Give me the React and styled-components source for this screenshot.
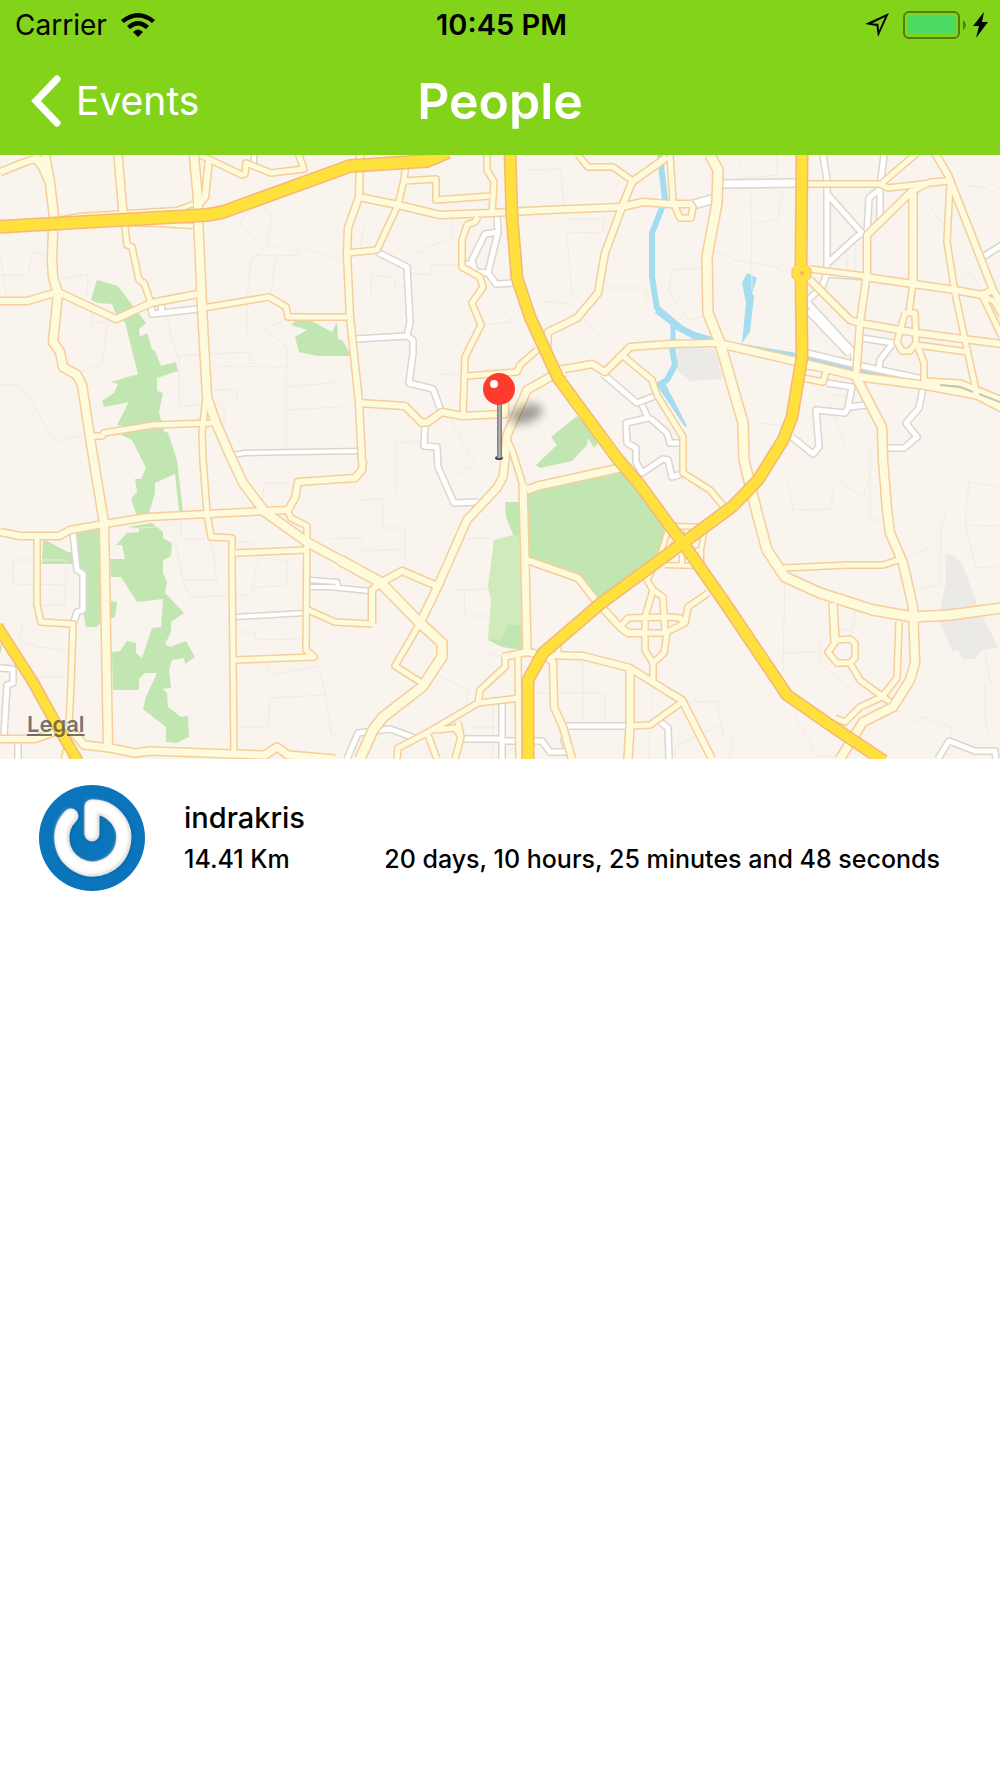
import React from "react";
import styled, { createGlobalStyle } from "styled-components";

const GlobalStyle = createGlobalStyle`
  body {
    margin: 0;
    background-color: #ffffff;
    font-family: Inter, "Liberation Sans", sans-serif;
  }
`;
const Page = styled.div`
  display: flex;
  flex-direction: column;
`;
const Header = styled.header`
  background-color: #83d31b;
`;
const StatusBar = styled.div`
  display: grid;
  grid-template-columns: 1fr auto 1fr;
  align-items: center;
  height: 50px;
  padding: 0 12px 0 15px;
  font-size: 28px;
  line-height: 50px;
  color: #000000;
`;
const StatusGroup = styled.div`
  display: flex;
  align-items: center;
  justify-content: ${(props) => props.$align || "flex-start"};
  gap: ${(props) => props.$gap};
`;
const Clock = styled.time`
  font-size: 29px;
  font-weight: 600;
`;
const NavBar = styled.nav`
  display: grid;
  grid-template-columns: 1fr auto 1fr;
  align-items: center;
  height: 102px;
  padding: 0 30px 3px;
  color: #ffffff;
`;
const BackButton = styled.button`
  justify-self: start;
  display: flex;
  align-items: center;
  gap: 15px;
  padding: 0;
  border: none;
  background: none;
  color: inherit;
  font-family: inherit;
  font-size: 39px;
  line-height: 50px;
  cursor: pointer;
`;
const Title = styled.h1`
  margin: 0;
  font-size: 50px;
  line-height: 60px;
  font-weight: 600;
`;
const MapBox = styled.section`
  position: relative;
`;
const MapSvg = styled.svg`
  display: block;
  width: 100%;
  height: auto;
`;
const LegalLink = styled.a`
  position: absolute;
  left: 27px;
  bottom: 21px;
  font-size: 22px;
  line-height: 28px;
  font-weight: 600;
  color: rgba(60, 60, 60, 0.7);
  text-decoration: underline;
`;
const PeopleList = styled.ul`
  margin: 0;
  padding: 0;
  list-style: none;
`;
const PersonRow = styled.li`
  display: flex;
  align-items: center;
  gap: 39px;
  padding: 26px 60px 26px 39px;
`;
const Info = styled.div`
  flex: 1;
  display: flex;
  flex-direction: column;
  gap: 8px;
`;
const Name = styled.div`
  font-size: 29px;
  line-height: 34px;
  font-weight: 500;
`;
const Details = styled.div`
  display: flex;
  justify-content: space-between;
  font-size: 25px;
  line-height: 32px;
  font-weight: 500;
`;

const park = "#c2e6b1";
const water = "#a5dcf0";
const ground = "#ebeae7";

const areas = [
  [park, "M97 125 118 131 133 151 146 168 139 174 140 182 147 178 152 194 155 196 161 211 176 207 178 216 157 223 157 236 163 238 159 257 164 276 168 278 177 305 183 357 179 356 175 319 155 328 155 338 149 358 137 361 131 344 137 337 135 324 141 324 146 313 137 295 132 285 121 280 130 272 117 270 129 247 104 252 102 246 114 238 118 229 111 227 138 219 125 167 118 164 112 149 98 148 91 145Z"],
  [park, "M127 372 152 368 163 377 163 383 172 388 171 401 163 405 163 418 167 427 165 438 184 458 171 467 171 477 165 489 170 492 186 486 195 502 185 509 184 503 172 505 169 515 171 533 162 534 167 538 168 552 181 562 188 561 189 582 176 588 166 587 166 572 143 554 146 542 157 518 145 518 139 524 139 535 113 535 112 497 120 496 127 486 136 488 136 498 142 503 152 473 161 472 163 444 137 447 121 422 111 422 110 404 125 404 122 390 116 390 127 378 139 377 139 373Z"],
  [park, "M110 446 117 447 115 462 110 464Z"],
  [park, "M75 378 101 374 102 467 96 472 86 472 83 457 83 418 77 412Z"],
  [park, "M43 384 68 397 72 397 74 409 42 409Z"],
  [park, "M0 489 2 492 0 500Z"],
  [park, "M291 170 297 164 310 165 332 177 337 167 338 184 343 186 351 201 318 201 299 197 295 182 307 175Z"],
  [park, "M577 261 588 272 598 288 594 293 588 283 587 290 572 306 540 313 536 310 557 290 551 282Z"],
  [park, "M528 338 623 317 650 353 667 377 658 402 600 447 580 423 529 402Z"],
  [park, "M505 347 520 347 522 495 502 492 488 485 508 440 513 379 506 362Z"],
  ["#cfebbc", "M494 385 513 380 521 380 522 470 508 470 501 485 488 484 491 445 488 432Z"],
  [ground, "M677 193 715 194 723 224 690 226 677 215Z"],
  [ground, "M945 400 952 400 963 410 977 450 983 462 998 492 982 495 975 504 962 504 958 495 953 497 939 465 942 445 946 428Z"],
  [water, "M747 118 757 123 752 138 754 141 750 177 742 188 746 148 742 128Z"],
  [water, "M656 229 664 226 687 271 685 272Z"],
];

const rivers = [
  [6, "M660 0 665 45 652 78 652 122 657 153 670 164 680 174"],
  [7, "M657 155 670 165 680 173 693 180 717 187"],
  [5, "M673 168 673 194 M717 187 793 200"],
  [6, "M672 192 675 210 667 225 658 230"],
  [6, "M790 200 857 213 895 222"],
];

const lanes = [
  "M0 120 28 120 32 98 44 98 45 112 M0 98 6 141 M62 124 88 119 87 142 M75 219 102 209 108 166 91 169 94 150",
  "M0 230 20 230 56 286 85 280 M166 160 177 201 249 197 251 209 M179 201 179 251 222 249",
  "M261 48 272 62 267 91 278 91 M250 55 240 68 263 94 251 105 247 145 247 180 M276 101 297 100 299 92 340 105 M256 100 276 101 271 138",
  "M211 211 287 212 287 192 265 175 297 158 M213 235 236 234 238 247 M286 215 286 294 M286 232 340 227 M286 255 340 252 M224 250 224 269",
  "M13 405 66 405 65 450 41 450 M13 405 13 429 65 430 M22 469 20 485 38 492 80 497 M175 385 183 425 190 442 251 440 259 402 287 406 287 430 252 433",
  "M262 357 264 328 305 328 M181 365 181 384 205 384 M130 374 175 370 M211 383 217 425 182 425 M235 387 251 387 251 395",
  "M267 504 269 520 318 511 326 540 270 543 268 572 238 572 M235 477 255 477 256 485 300 484 M326 542 331 580 340 580 M25 522 70 522",
  "M371 120 371 140 M372 120 395 123 395 132 407 131 M364 73 359 97 M412 100 452 82 452 65 M410 118 430 120 431 110 460 110",
  "M523 15 561 14 565 65 M566 64 605 64 602 78 567 77 572 144 M606 133 646 133 646 148 M540 146 573 149 605 190 M495 145 513 167 M482 170 512 167",
  "M435 219 463 220 M448 260 475 310 450 322 M396 338 396 288 420 286 M356 345 383 344 383 373 405 373 405 405 M330 384 362 383 362 396 402 394",
  "M452 384 490 383 M455 435 488 434 M464 434 465 461 488 461 M490 495 490 501 504 501 M435 518 469 536 466 550",
  "M583 503 583 570 M535 538 605 538 605 570 M653 528 648 604 M470 572 500 572 M493 540 493 603",
  "M738 0 740 10 751 22 752 135 M777 0 777 20 730 25 M755 68 778 64 783 35 M713 95 735 105 775 112 802 124",
  "M668 135 673 115 702 113 M668 135 688 165 710 160 M760 268 784 271 M846 85 847 115 M855 85 855 120 M898 70 878 90 872 80",
  "M918 38 948 75 M900 20 920 70 M964 30 987 33 990 38 1000 32 M960 122 970 117 982 135 M895 130 878 130",
  "M780 320 789 329 793 355 832 354 832 336 840 327 863 342 870 322 M870 290 870 365 882 365 M830 240 855 241 M830 250 845 290",
  "M785 422 783 515 780 520 M783 498 820 497 M820 485 835 474 853 475 855 455 M820 485 820 508 855 537 865 525",
  "M907 402 933 391 M912 435 940 430 941 372 947 355 M965 370 969 327 1000 332 M965 370 976 413 1000 411 M965 370 1000 371",
  "M985 495 990 528 1000 523 M985 528 985 560 988 580 M897 554 915 569 920 561 952 572 950 580 M795 560 817 601 840 602",
  "M675 548 717 546 723 580 733 585 729 603 M677 590 722 569 M675 590 675 603",
];

// [fill width, path]
const streets = [
  [5, "M151 150 152 159 162 158 198 154 M161 148 162 158"],
  [4, "M233 300 245 298 360 296"],
  [4, "M254 0 254 10"],
  [5, "M73 378 77 415 83 419 83 455 77 457 74 467"],
  [5, "M0 513 13 514 13 528 7 530 4 580 M18 588 18 604"],
  [4, "M235 462 304 458"],
  [4, "M310 425 337 427 338 432 M310 432 330 432 370 436"],
  [5, "M497 60 498 77 488 118 496 129 513 128 M498 77 485 79 472 105 475 117 488 118 M465 109 472 109"],
  [5, "M377 97 407 112 410 167 407 181 413 185 413 198 409 228 433 234 441 256 M355 184 407 181"],
  [5, "M425 270 424 291 437 292 438 312 454 348 478 347"],
  [5, "M603 219 637 248 655 241 M642 250 648 263 626 268 627 288 636 293 636 307 642 318 663 304 668 305 672 322 685 318"],
  [5, "M650 263 667 278 670 288 681 288"],
  [8, "M692 50 713 44"],
  [7, "M723 29 797 28"],
  [5, "M823 0 827 25 827 118 822 132 808 145 M828 40 862 78 855 83 828 108"],
  [5, "M884 0 880 32 880 65 M880 34 869 43 867 80"],
  [5, "M827 119 865 122 M862 183 893 188 880 205 879 213"],
  [5, "M808 148 853 197 855 208 M808 156 849 199"],
  [5, "M807 198 857 210 923 224"],
  [5, "M827 228 852 232 848 252 868 250 M848 253 845 258 816 255 819 292 813 299 792 282"],
  [5, "M923 233 919 253 906 268 917 282 904 293 887 293"],
  [5, "M983 102 1002 90"],
  [5, "M502 543 502 604 M463 584 502 584 M502 586 542 586 550 597 567 597 M563 582 569 600"],
  [5, "M565 571 627 571"],
  [5, "M347 604 358 578 390 574 415 583"],
  [5, "M658 565 668 573 669 604"],
  [5, "M938 604 949 586 975 596 995 596 996 604"],
];

const roads = [
  [6, "M0 17 28 6 40 3"],
  [8, "M34 0 43 12 50 28 54 62 53 77 52 105 53 122 58 138 53 187 60 197 63 212 77 220 82 230 92 295 104 368 108 592 M45 0 50 28"],
  [7, "M118 0 123 58 125 72"],
  [5, "M125 72 127 90 132 92 139 125 144 128 151 148"],
  [8, "M194 0 198 45 198 62 200 105 202 152 207 242"],
  [8, "M207 242 216 268 230 300 243 328 265 357 307 387 340 405"],
  [9, "M340 405 380 427 420 468 442 488 442 502 422 532 383 562 373 575 360 604"],
  [5, "M206 242 202 278 203 305 207 358 211 382 232 383 232 412 234 599"],
  [5, "M92 281 102 281 104 278 153 270 212 268"],
  [6, "M0 146 27 146 58 137 116 164 151 148 198 139"],
  [5, "M203 153 269 142 286 152 288 162 347 162"],
  [5, "M200 0 242 20 245 19 246 8 271 18 304 14 298 -2"],
  [6, "M209 5 205 42 198 50"],
  [4, "M58 65 80 61 177 55 193 49 M128 68 160 69 193 71 M0 73 55 69"],
  [6, "M0 377 20 381 59 381 70 375 104 369 148 362 207 359 265 356 288 355 295 343 298 327 355 323 362 315 363 305"],
  [5, "M37 380 37 450 41 467 73 469 71 528 69 572"],
  [7, "M69 572 84 590 110 593 135 598 150 596 233 599 265 600 277 592 288 600 335 604"],
  [6, "M0 584 35 584 55 577 M68 590 65 604"],
  [5, "M288 357 291 363 307 371 306 495 314 502 235 505"],
  [5, "M235 398 307 395"],
  [5, "M308 455 335 467 372 469"],
  [6, "M372 469 372 435 380 428 402 416 437 431"],
  [6, "M360 0 359 42 348 73 347 98 350 162 359 248 362 308"],
  [5, "M407 -2 404 25 398 50 377 95 347 98 M404 26 436 24 436 45 490 41"],
  [6, "M359 42 398 50 440 60 492 58 547 55 622 52"],
  [6, "M622 52 643 47 670 49 690 49"],
  [5, "M487 0 487 15 494 27 492 58"],
  [5, "M478 62 475 67 467 70 462 85 462 112 480 122 483 132 472 148 481 170 465 202 463 260"],
  [6, "M359 248 405 251 422 268 428 267 442 257 462 261 505 259 505 245"],
  [5, "M467 221 517 217 520 210 537 195"],
  [6, "M667 2 632 27 622 52 605 98 598 138 577 163 548 177 547 195"],
  [5, "M578 0 588 12 613 12 633 26"],
  [7, "M565 217 550 222 527 235 517 258 507 280 505 305 503 322 497 333 467 365 437 433 420 468"],
  [5, "M420 468 395 511 422 528"],
  [5, "M507 285 512 295 523 330"],
  [7, "M523 330 525 405 527 498"],
  [6, "M558 215 582 211 592 209 605 217 630 192 670 189 717 188"],
  [7, "M717 188 790 205 803 208 860 222 923 230 977 240 1002 253"],
  [5, "M623 201 652 225 657 240 683 282 683 318 710 335 725 353"],
  [5, "M670 0 673 47 680 63 691 63 693 52 690 48"],
  [9, "M710 0 718 15 717 48 707 102 708 158 720 188 743 268 744 305 757 358 767 395 785 422 820 438 873 455 913 462 950 460 1002 453"],
  [5, "M808 29 880 29 888 33 948 26 M882 28 917 -2 M913 36 930 27 948 26"],
  [6, "M935 -2 948 20 993 135 1002 150"],
  [5, "M950 28 947 87 955 138 965 185 976 235"],
  [7, "M913 38 913 128"],
  [5, "M913 128 909 158 M905 158 897 187 902 196 910 196 916 188 915 158 905 158 M918 192 924 208 924 228"],
  [6, "M913 35 867 80 867 118 860 168 856 222"],
  [8, "M856 222 882 272 883 305 887 355 890 378 903 408 913 452 915 508 910 525 893 552 863 567 840 604"],
  [6, "M865 122 955 135 982 140 993 135"],
  [5, "M810 114 865 121 M982 140 1002 182 M984 142 994 146 1002 160"],
  [6, "M810 125 850 165 860 168 917 178 1002 189"],
  [5, "M917 190 968 197"],
  [5, "M923 226 960 228 980 236 1002 245"],
  [5, "M805 211 827 213 823 227 803 223"],
  [7, "M527 335 538 331 620 313"],
  [6, "M527 405 578 423 597 447 620 472 628 478 645 478"],
  [5, "M622 470 628 463 670 462 680 463 685 468 667 477 664 498 653 508 645 495 645 462 653 435 647 425 652 415"],
  [5, "M653 435 663 442 665 478 M645 478 665 478 M653 508 653 525 M685 468 688 452 708 438"],
  [6, "M503 502 527 497 543 500 583 501 630 513 670 538 682 545 712 604"],
  [5, "M682 547 650 570 630 571"],
  [7, "M630 515 630 572 628 604"],
  [5, "M558 490 558 502"],
  [6, "M543 500 553 507 554 552 563 572 572 604"],
  [5, "M518 502 519 604 M478 548 520 543"],
  [5, "M505 502 505 512 480 535 478 548 427 578 398 593 397 604 M428 580 437 604 M458 567 461 582 455 604 M435 575 455 573 461 582"],
  [5, "M784 413 848 410 883 410 898 405"],
  [7, "M833 448 835 487"],
  [5, "M837 485 850 484 855 488 855 503 850 508 837 508 828 497Z"],
  [5, "M850 508 860 525 890 547 M899 467 897 523 882 542 860 552 845 567 835 563"],
  [4, "M675 371 705 372 701 395 701 411 665 410 M669 372 658 407 M687 375 686 384 M670 385 680 384 M690 397 701 395 M682 400 682 410 M666 395 663 410"],
];

const highways = [
  [11, "M-3 72 207 60 223 57 350 11 427 6 448 -3"],
  [9, "M-3 471 33 527 60 576 78 606"],
  [10, "M510 -3 512 62 517 123 530 162 558 223 617 303 640 330 667 367 683 388 725 448 787 540 833 572 884 606"],
  [10, "M802 -3 801 118 802 202 792 262 783 285 758 325 733 351 683 388 600 449 543 498 528 525 528 606"],
];

function Network({ lines, color, casing }) {
  return (
    <g fill="none" strokeLinejoin="round" strokeLinecap="butt">
      {lines.map(([width, d]) => (
        <path key={`edge${d}`} d={d} stroke={casing} strokeWidth={width + 3} />
      ))}
      {lines.map(([width, d]) => (
        <path key={d} d={d} stroke={color} strokeWidth={width} />
      ))}
    </g>
  );
}

function StreetMap() {
  return (
    <MapSvg viewBox="0 0 1000 604" role="img" aria-label="Map">
      <defs>
        <filter id="pinBlur" x="-50%" y="-50%" width="200%" height="200%">
          <feGaussianBlur stdDeviation="5" />
        </filter>
        <linearGradient id="needle">
          <stop offset="0" stopColor="#77777a" />
          <stop offset="0.5" stopColor="#b5b5b8" />
          <stop offset="1" stopColor="#77777a" />
        </linearGradient>
      </defs>
      <rect width="1000" height="604" fill="#f9f4ed" />
      {areas.map(([color, d]) => (
        <path key={d} d={d} fill={color} />
      ))}
      <g fill="none" stroke="#f0ebe4" strokeWidth="1">
        {lanes.map((d) => (
          <path key={d} d={d} />
        ))}
      </g>
      <g fill="none" stroke={water} strokeLinejoin="round">
        {rivers.map(([width, d]) => (
          <path key={d} d={d} strokeWidth={width} />
        ))}
      </g>
      <Network lines={streets} color="#ffffff" casing="#dcd6cd" />
      <Network lines={roads} color="#fdfbdb" casing="#f7ce9b" />
      <path d="M940 230 960 232 973 237 M979 239 1000 247" fill="none" stroke="#c6c8b4" strokeWidth="2" />
      <Network lines={highways} color="#ffe03c" casing="#f5b877" />
      <path d="M797 109h9l5 5v8l-4 4h-11l-4-4v-8z" fill="#ffe03c" stroke="#f5b877" />
      <path d="M797 105h9v24h-9z" fill="#ffe03c" />
      <circle cx="802" cy="118" r="2" fill="#f0b070" />
      <ellipse cx="526" cy="259" rx="17" ry="9" transform="rotate(-20 526 259)" fill="#000000" opacity="0.36" filter="url(#pinBlur)" />
      <ellipse cx="499" cy="303" rx="4" ry="2" fill="#444444" />
      <rect x="497" y="246" width="5" height="57" fill="url(#needle)" />
      <circle cx="499" cy="234" r="16" fill="#ff3b30" />
      <circle cx="494" cy="229" r="4" fill="#ffffff" />
    </MapSvg>
  );
}

function WifiIcon() {
  return (
    <svg width="34" height="24" viewBox="0 0 34 24" aria-hidden="true">
      <path d="M0 7Q17 -7 34 7L31 10Q17 -1 3 10Z" />
      <path d="M6 13Q17 3 28 13L25 16Q17 9 9 16Z" />
      <path d="M12 19Q17 14 22 19L17 24Z" />
    </svg>
  );
}

function LocationIcon() {
  return (
    <svg width="24" height="24" viewBox="0 0 24 24" aria-hidden="true">
      <path fillRule="evenodd" d="M0 11 24 0 13 24 11.5 13Z M7 10.5 20 4 14 17.5 13.4 10.8Z" />
    </svg>
  );
}

function BatteryIcon() {
  return (
    <svg width="64" height="28" viewBox="0 0 64 28" aria-hidden="true">
      <rect x="1" y="1" width="55" height="26" rx="5" fill="none" stroke="#4f8013" strokeWidth="2" />
      <rect x="4" y="5" width="49" height="18" rx="3" fill="#4cd964" />
      <path d="M60 9Q63 11 63 14Q63 17 60 19Z" fill="#4f8013" />
    </svg>
  );
}

function BoltIcon() {
  return (
    <svg width="15" height="26" viewBox="0 0 15 26" aria-hidden="true">
      <path d="M11 0 0 14H6L3 26 15 10H9Z" />
    </svg>
  );
}

function ChevronIcon() {
  return (
    <svg width="31" height="52" viewBox="0 0 31 52" aria-hidden="true">
      <path d="M27 4 6 26 27 48" fill="none" stroke="#ffffff" strokeWidth="7" strokeLinecap="round" strokeLinejoin="miter" />
    </svg>
  );
}

function Avatar() {
  const shape = "M-21 -22A31 31 0 1 0 0 -31V-4";
  return (
    <svg width="106" height="106" viewBox="-53 -53 106 106" role="img" aria-label="indrakris">
      <defs>
        <filter id="soft" x="-20%" y="-20%" width="140%" height="140%">
          <feGaussianBlur stdDeviation="1.5" />
        </filter>
      </defs>
      <circle r="53" fill="#0a75ba" />
      <g fill="none" strokeLinecap="round" strokeLinejoin="round">
        <path d={shape} stroke="#075a92" strokeWidth="16" filter="url(#soft)" />
        <path d={shape} stroke="#dedede" strokeWidth="15" />
        <path d={shape} stroke="#ffffff" strokeWidth="12" transform="translate(-1 -1)" filter="url(#soft)" />
      </g>
    </svg>
  );
}

const people = [
  {
    name: "indrakris",
    distance: "14.41 Km",
    time: "20 days, 10 hours, 25 minutes and 48 seconds",
  },
];

function App() {
  return (
    <Page>
      <GlobalStyle />
      <Header>
        <StatusBar>
          <StatusGroup $gap="14px">
            <span>Carrier</span>
            <WifiIcon />
          </StatusGroup>
          <Clock>10:45 PM</Clock>
          <StatusGroup $gap="6px" $align="flex-end">
            <StatusGroup $gap="14px">
              <LocationIcon />
              <BatteryIcon />
            </StatusGroup>
            <BoltIcon />
          </StatusGroup>
        </StatusBar>
        <NavBar>
          <BackButton type="button">
            <ChevronIcon />
            Events
          </BackButton>
          <Title>People</Title>
        </NavBar>
      </Header>
      <MapBox>
        <StreetMap />
        <LegalLink href="#legal">Legal</LegalLink>
      </MapBox>
      <PeopleList>
        {people.map((person) => (
          <PersonRow key={person.name}>
            <Avatar />
            <Info>
              <Name>{person.name}</Name>
              <Details>
                <span>{person.distance}</span>
                <span>{person.time}</span>
              </Details>
            </Info>
          </PersonRow>
        ))}
      </PeopleList>
    </Page>
  );
}

export default App;
